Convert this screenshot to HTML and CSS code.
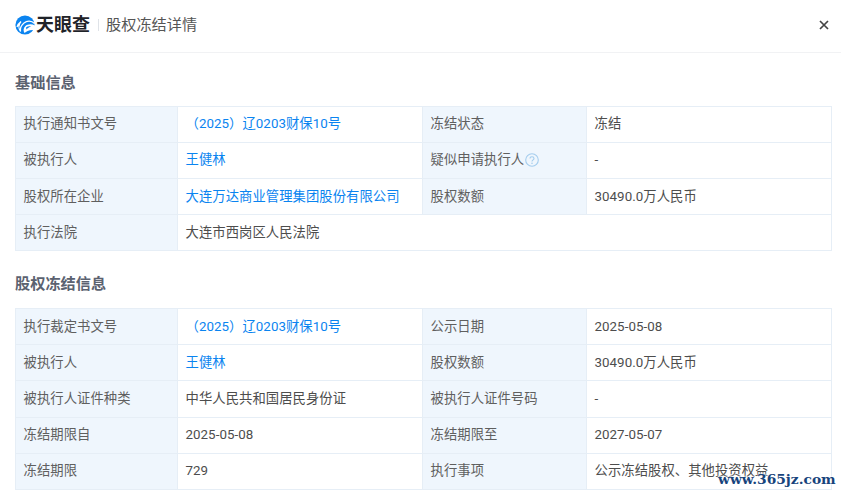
FILE: index.html
```html
<!DOCTYPE html>
<html lang="zh">
<head>
<meta charset="utf-8">
<title>股权冻结详情</title>
<link rel="stylesheet" href="styles.css">
</head>
<body>
<header class="header">
  <svg class="logo-icon" viewBox="0 0 20 20" width="20" height="20">
    <circle cx="10" cy="10" r="9.6" fill="#0b84f0"/>
    <path d="M19.5 8.5C16.5 5.5 12 5.5 9 8C6.5 10 5 13 5.5 16.5C3.5 13.5 3.5 9.5 6 6.5C4 8 2.5 10 2 12" fill="none" stroke="#fff" stroke-width="1.2"/>
    <path d="M20 10.5C16.5 8.5 12.5 9 10.2 11.2C8.4 13 8 15.5 9.5 18C11.5 16 14 14.5 20 15Z" fill="#fff"/>
    <path d="M11 12.5C12.5 11.3 14.5 11 16 11.7C14 12 12.5 13 11.5 14.5Z" fill="#0b84f0"/>
  </svg>
  <span class="logo-text">天眼查</span>
  <span class="divider"></span>
  <span class="title">股权冻结详情</span>
  <svg class="close" viewBox="0 0 10 10" width="10" height="10"><path d="M1 1L9 9M9 1L1 9" stroke="#444" stroke-width="1.7" fill="none"/></svg>
</header>
<main class="main">
  <h2 class="section first">基础信息</h2>
  <div class="table">
    <div class="cell label">执行通知书文号</div><div class="cell link">（2025）辽0203财保10号</div><div class="cell label">冻结状态</div><div class="cell">冻结</div>
    <div class="cell label">被执行人</div><div class="cell link">王健林</div><div class="cell label">疑似申请执行人<svg class="help" viewBox="0 0 14 14" width="14" height="14"><circle cx="7" cy="7" r="6.3" fill="none" stroke="#a4cdee" stroke-width="1.1"/><path d="M5 5.6C5 4.4 6 3.7 7 3.7C8 3.7 9 4.4 9 5.5C9 6.8 7 6.9 7 8.5" fill="none" stroke="#a4cdee" stroke-width="1.1"/><circle cx="7" cy="10.3" r=".8" fill="#a4cdee"/></svg></div><div class="cell">-</div>
    <div class="cell label">股权所在企业</div><div class="cell link">大连万达商业管理集团股份有限公司</div><div class="cell label">股权数额</div><div class="cell">30490.0万人民币</div>
    <div class="cell label">执行法院</div><div class="cell span">大连市西岗区人民法院</div>
  </div>
  <h2 class="section second">股权冻结信息</h2>
  <div class="table table-tall">
    <div class="cell label">执行裁定书文号</div><div class="cell link">（2025）辽0203财保10号</div><div class="cell label">公示日期</div><div class="cell">2025-05-08</div>
    <div class="cell label">被执行人</div><div class="cell link">王健林</div><div class="cell label">股权数额</div><div class="cell">30490.0万人民币</div>
    <div class="cell label">被执行人证件种类</div><div class="cell">中华人民共和国居民身份证</div><div class="cell label">被执行人证件号码</div><div class="cell">-</div>
    <div class="cell label">冻结期限自</div><div class="cell">2025-05-08</div><div class="cell label">冻结期限至</div><div class="cell">2027-05-07</div>
    <div class="cell label">冻结期限</div><div class="cell">729</div><div class="cell label">执行事项</div><div class="cell">公示冻结股权、其他投资权益</div>
  </div>
</main>
<div class="watermark">www.365jz.com</div>
</body>
</html>
```
FILE: styles.css
```css
html, body { margin: 0; padding: 0; height: 494px; overflow: hidden; background: #fff; }
body { font-family: Roboto, "Noto Sans CJK SC", sans-serif; color: #333; position: relative; }
.header { height: 53px; box-sizing: border-box; border-bottom: 1px solid #f1f2f4; display: flex; align-items: center; padding: 0 11px 2px 15px; }
.logo-icon { flex: none; }
.logo-text { font-size: 18px; font-weight: 700; color: #1f2329; margin-left: 1px; line-height: 20px; }
.divider { width: 1px; height: 12px; background: #dfe3e8; margin: 0 7px 0 8px; }
.title { font-size: 15.2px; color: #555; line-height: 20px; }
.close { margin-left: auto; margin-right: 1px; }
.main { padding: 0 9px 0 15px; }
.section { margin: 0; font-size: 15.2px; font-weight: 700; color: #5b6270; line-height: 20px; }
.first { padding: 20px 0 13px; }
.second { padding: 23px 0 14px; }
.table { display: grid; grid-template-columns: 162px 245px 164px 245px; grid-auto-rows: 36.1px; border-top: 1px solid #e6eef6; border-left: 1px solid #e6eef6; box-sizing: border-box; width: 817px; }
.table-tall { grid-auto-rows: 36.2px; margin-top: -.4px; }
.cell { font-size: 13.33px; line-height: 18px; color: #4d4d4d; display: flex; align-items: center; padding: 0 7.5px .4px; box-sizing: border-box; border-right: 1px solid #e6eef6; border-bottom: 1px solid #e6eef6; white-space: nowrap; overflow: hidden; letter-spacing: .05px; }
.table-tall .cell { padding-bottom: 0; }
.label { background: #eff6fd; color: #5f5f5f; }
.link { color: #0a84f0; }
.span { grid-column: span 3; }
.help { margin-left: 1px; flex: none; }
.watermark { position: absolute; left: 718px; top: 469px; font-family: "DejaVu Serif", serif; font-weight: 700; font-size: 13.8px; line-height: 20px; color: #17447c; text-shadow: 0 0 2px #fff, 0 0 2px #fff, 0 0 3px #fff; white-space: nowrap; }
```
